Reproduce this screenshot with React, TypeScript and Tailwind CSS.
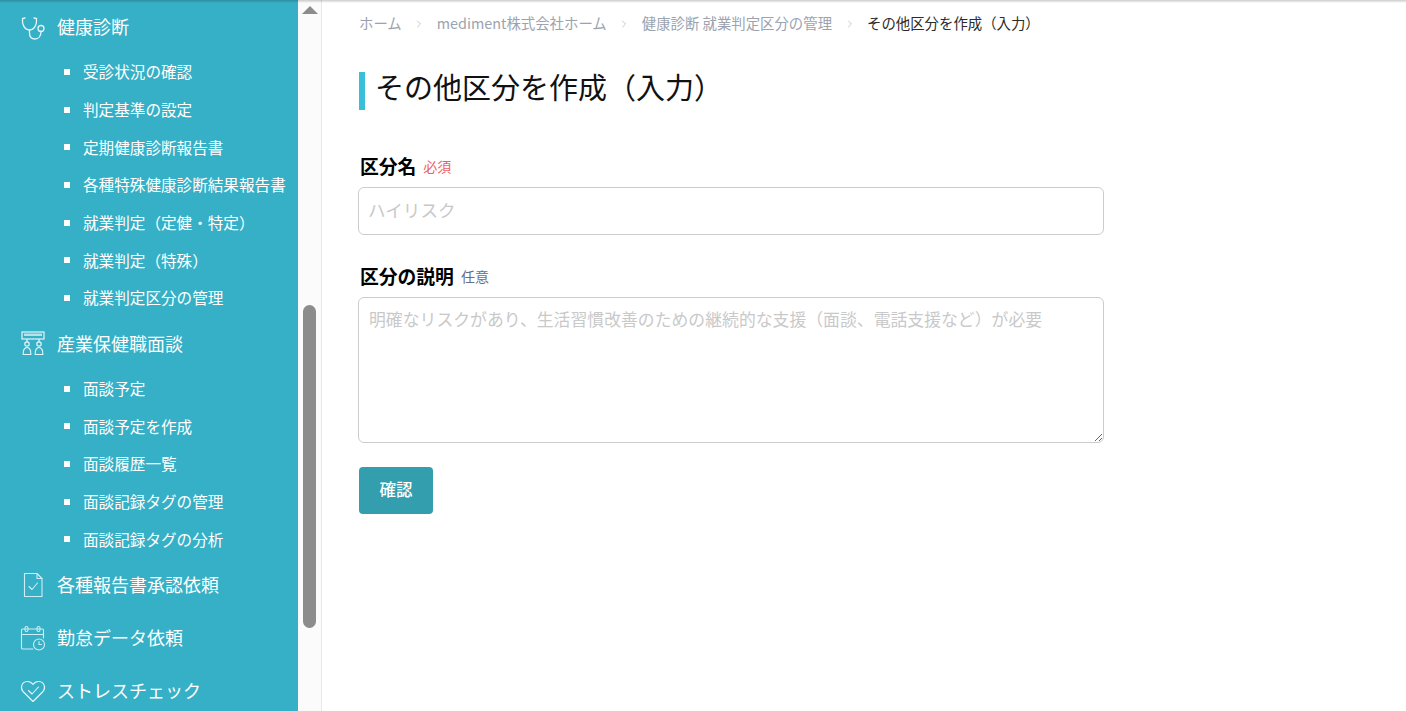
import React from 'react';
import { ChevronRight } from 'lucide-react';

const font = 'font-["Noto_Sans_CJK_JP","Noto_Sans",sans-serif]';

const StethoscopeIcon = () => (
    <svg width="26" height="26" viewBox="0 0 26 26" fill="none" stroke="#e6f6f9" strokeWidth="1.3" strokeLinecap="round">
        <path d="M5 4 L2.5 4.6 C2 10 4 15.5 9.5 16 C15 15.5 17 10 16.5 4.6 L14 4" />
        <path d="M9.5 16 V19 C9.5 23 12 25 15 25 C18.5 25 21 22 21 17.5" />
        <circle cx="21" cy="14.5" r="3" />
    </svg>
);

const InterviewIcon = () => (
    <svg width="26" height="26" viewBox="0 0 26 26" fill="none" stroke="#e6f6f9" strokeWidth="1.2">
        <rect x="2" y="2" width="22" height="7" />
        <rect x="4" y="3.5" width="18" height="2.5" fill="#b5e3ec" stroke="none" />
        <path d="M7 9 V12 M19 9 V12" />
        <circle cx="7" cy="14" r="2.2" />
        <circle cx="19" cy="14" r="2.2" />
        <path d="M3.2 24.5 C3 20 4.5 17.5 7 17.5 C9.5 17.5 11 20 10.8 24.5 Z" />
        <path d="M15.2 24.5 C15 20 16.5 17.5 19 17.5 C21.5 17.5 23 20 22.8 24.5 Z" />
    </svg>
);

const ReportIcon = () => (
    <svg width="26" height="26" viewBox="0 0 26 26" fill="none" stroke="#cdeef4" strokeWidth="1.1" strokeLinejoin="round" strokeLinecap="round">
        <path d="M4.5 1.5 H17 L22 6.5 V24.5 H4.5 Z" />
        <path d="M17 1.5 V6.5 H22" />
        <path d="M9 14.5 L12 17.5 L17.5 11" />
    </svg>
);

const CalendarIcon = () => (
    <svg width="26" height="26" viewBox="0 0 26 26" fill="none" stroke="#cdeef4" strokeWidth="1.1" strokeLinecap="round">
        <path d="M13 24 H2.5 C1.8 24 1.5 23.7 1.5 23 V5 C1.5 4.3 1.8 4 2.5 4 H22.5 C23.2 4 23.5 4.3 23.5 5 V13" />
        <path d="M1.5 9.5 H23.5" />
        <rect x="5" y="1.5" width="3" height="5" rx="1.5" />
        <rect x="17" y="1.5" width="3" height="5" rx="1.5" />
        <circle cx="19" cy="19.5" r="5.5" />
        <path d="M19 16.5 V19.5 H21.5" />
    </svg>
);

const HeartIcon = () => (
    <svg width="26" height="26" viewBox="0 0 26 26" fill="none" stroke="#e6f6f9" strokeWidth="1.1" strokeLinecap="round" strokeLinejoin="round">
        <path d="M13 23.5 L3 13.5 C0 10 1.5 4 7 3.5 C9.5 3.3 11.5 4.5 13 6.5 C14.5 4.5 16.5 3.3 19 3.5 C24.5 4 26 10 23 13.5 Z" />
        <path d="M8.5 12.5 L12 16 L18.5 9" />
    </svg>
);

const checkupItems = [
    '受診状況の確認',
    '判定基準の設定',
    '定期健康診断報告書',
    '各種特殊健康診断結果報告書',
    '就業判定（定健・特定）',
    '就業判定（特殊）',
    '就業判定区分の管理',
];

const interviewItems = ['面談予定', '面談予定を作成', '面談履歴一覧', '面談記録タグの管理', '面談記録タグの分析'];

function MenuHeader({ icon, label }: { icon: React.ReactNode; label: string }) {
    return (
        <div className="flex items-center h-[53px] pl-[20px] text-[18px] text-white">
            <span className="w-[37px] flex items-center">{icon}</span>
            <span>{label}</span>
        </div>
    );
}

function SubMenu({ items }: { items: string[] }) {
    return (
        <ul>
            {items.map((item) => (
                <li key={item} className="flex items-center h-[37.7px] pl-[64px] text-[15.6px] text-white whitespace-nowrap">
                    <span className="w-[6px] h-[6px] bg-white mr-[13px]" />
                    {item}
                </li>
            ))}
        </ul>
    );
}

const crumbs = ['ホーム', 'mediment株式会社ホーム', '健康診断 就業判定区分の管理'];

export default function App() {
    return (
        <div className={`${font} relative flex h-[711px] w-[1406px] overflow-hidden bg-white`}>
            <div className="absolute top-0 left-0 right-0 h-[3px] bg-gradient-to-b from-black/20 to-transparent" />

            <aside className="w-[298px] h-full shrink-0 overflow-hidden bg-[#36b0c6]">
                <MenuHeader icon={<StethoscopeIcon />} label="健康診断" />
                <SubMenu items={checkupItems} />
                <MenuHeader icon={<InterviewIcon />} label="産業保健職面談" />
                <SubMenu items={interviewItems} />
                <MenuHeader icon={<ReportIcon />} label="各種報告書承認依頼" />
                <MenuHeader icon={<CalendarIcon />} label="勤怠データ依頼" />
                <MenuHeader icon={<HeartIcon />} label="ストレスチェック" />
            </aside>

            <div className="w-[24px] h-full shrink-0 bg-[#fbfbfb] border-r border-[#e8e8e8] pl-[5px] pt-[6px]">
                <div className="w-0 h-0 ml-[-1px] border-x-[8px] border-x-transparent border-b-[8px] border-b-[#8c8c8c]" />
                <div className="w-[13px] h-[323px] mt-[291px] rounded-full bg-[#8c8c8c]" />
            </div>

            <main className="flex-1 h-full pl-[37px] pt-[13px]">
                <nav className="flex items-center h-[20px] text-[14.4px] text-[#9ca3af] whitespace-nowrap">
                    {crumbs.map((c) => (
                        <React.Fragment key={c}>
                            <span>{c}</span>
                            <ChevronRight size={12} strokeWidth={1.2} className="mx-[11.5px] mt-[2px]" />
                        </React.Fragment>
                    ))}
                    <span className="text-[#2b2b2b]">その他区分を作成（入力）</span>
                </nav>

                <h1 className="mt-[39px] h-[38px] border-l-[6px] border-[#38bfdc] pl-[10px] text-[29px] leading-[28px] text-[#111]">
                    その他区分を作成（入力）
                </h1>

                <form className="w-[746px] mt-[42px] ml-[-1px]">
                    <div className="flex items-center pl-[2px]">
                        <label className="text-[18.8px] font-bold text-black">区分名</label>
                        <span className="ml-[7px] text-[14px] text-[#ef5f5f]">必須</span>
                    </div>
                    <input
                        type="text"
                        placeholder="ハイリスク"
                        className="block w-full h-[48px] mt-[7px] pl-[9px] pr-[9px] pb-[3px] rounded-[6px] border border-[#cccccc] text-[17.6px] placeholder:text-[#c9c9c9] outline-none"
                    />

                    <div className="flex items-center pl-[2px] mt-[27px]">
                        <label className="text-[18.8px] font-bold text-black">区分の説明</label>
                        <span className="ml-[7px] text-[14px] text-[#666f85]">任意</span>
                    </div>
                    <textarea
                        placeholder="明確なリスクがあり、生活習慣改善のための継続的な支援（面談、電話支援など）が必要"
                        className="block w-full h-[146px] mt-[7px] px-[10px] py-[8px] rounded-[6px] border border-[#cccccc] text-[16.85px] placeholder:text-[#c9c9c9] outline-none"
                    />

                    <button
                        type="button"
                        className="block w-[74px] h-[47px] mt-[24px] ml-[1px] pb-[3px] rounded-[4px] bg-[#339eae] text-[16.5px] font-medium text-white"
                    >
                        確認
                    </button>
                </form>
            </main>
        </div>
    );
}
